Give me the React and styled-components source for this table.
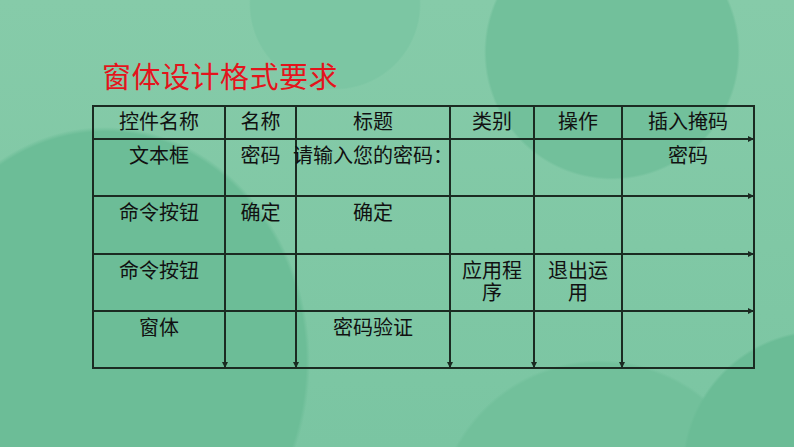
import React from "react";
import styled, { createGlobalStyle, css } from "styled-components";

const GlobalStyle = createGlobalStyle`
  html, body {
    margin: 0;
    padding: 0;
  }
  body {
    font-family: "Noto Sans CJK SC", "Noto Sans", sans-serif;
  }
`;

const Slide = styled.div`
  width: 794px;
  height: 447px;
  overflow: hidden;
  box-sizing: border-box;
  padding: 57px 0 0 92px;
  background:
    radial-gradient(circle 128px at 612px 52px, #72c09b 98%, transparent 100%),
    radial-gradient(circle 86px at 335px 4px, #7cc6a3 98%, transparent 100%),
    radial-gradient(circle 140px at 822px 470px, #6bbc96 98%, transparent 100%),
    radial-gradient(circle 165px at 600px 525px, #72c09b 98%, transparent 100%),
    radial-gradient(205px 235px at 105px 362px, #6cbd97 98%, transparent 100%),
    linear-gradient(180deg, #86cba9 0%, #80c8a5 55%, #7ac5a2 100%);
`;

const Title = styled.h1`
  margin: 0 0 12px 10px;
  font-size: 29px;
  line-height: 36px;
  font-weight: 400;
  letter-spacing: 0.5px;
  color: #e4141c;
  font-family: "Noto Sans CJK SC", sans-serif;
`;

const Grid = styled.div`
  display: grid;
  width: 663px;
  grid-template-columns: 132px 71px 154px 84px 88px 132px;
  grid-template-rows: 33px 57px 58px 57px 57px;
  border-top: 2px solid #1b2b22;
  border-left: 2px solid #1b2b22;
  box-sizing: border-box;
`;

const Cell = styled.div`
  position: relative;
  box-sizing: border-box;
  display: flex;
  justify-content: center;
  align-items: flex-start;
  padding: ${(p) => (p.$head ? "3px 6px 0" : "4px 6px 0")};
  border-right: 2px solid #1b2b22;
  border-bottom: 2px solid #1b2b22;
  font-size: 20px;
  line-height: 22px;
  color: #111;
  text-align: center;
  white-space: ${(p) => (p.$nowrap ? "nowrap" : "normal")};

  ${(p) =>
    p.$arrowRight &&
    css`
      &::after {
        content: "";
        position: absolute;
        right: -1px;
        bottom: -4px;
        border-top: 3px solid transparent;
        border-bottom: 3px solid transparent;
        border-left: 6px solid #1b2b22;
      }
    `}

  ${(p) =>
    p.$arrowDown &&
    css`
      &::before {
        content: "";
        position: absolute;
        right: -4px;
        bottom: -1px;
        border-left: 3px solid transparent;
        border-right: 3px solid transparent;
        border-top: 6px solid #1b2b22;
      }
    `}
`;

const rows = [
  ["控件名称", "名称", "标题", "类别", "操作", "插入掩码"],
  ["文本框", "密码", "请输入您的密码：", "", "", "密码"],
  ["命令按钮", "确定", "确定", "", "", ""],
  ["命令按钮", "", "", "应用程序", "退出运用", ""],
  ["窗体", "", "密码验证", "", "", ""],
];

export default function App() {
  return (
    <>
      <GlobalStyle />
      <Slide>
        <Title>窗体设计格式要求</Title>
        <Grid>
          {rows.map((row, r) =>
            row.map((text, c) => (
              <Cell
                key={`${r}-${c}`}
                $head={r === 0}
                $nowrap={text.length > 6}
                $arrowRight={c === row.length - 1 && r < rows.length - 1}
                $arrowDown={r === rows.length - 1 && c < row.length - 1}
              >
                <span>{text}</span>
              </Cell>
            ))
          )}
        </Grid>
      </Slide>
    </>
  );
}
